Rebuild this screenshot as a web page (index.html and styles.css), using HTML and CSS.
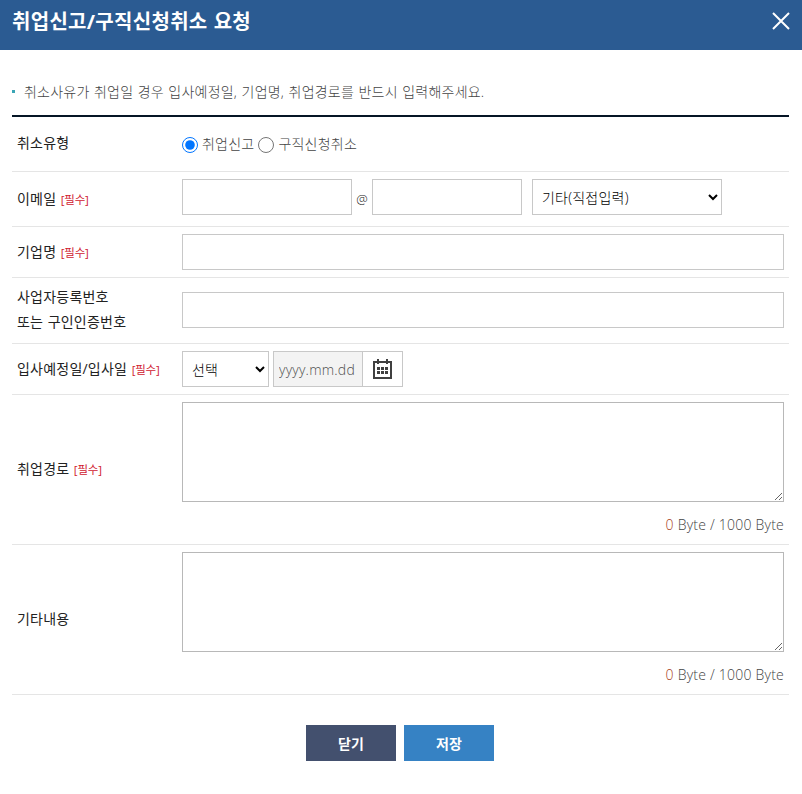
FILE: index.html
```html
<!DOCTYPE html>
<html lang="ko">
<head>
  <meta charset="UTF-8" />
  <meta name="viewport" content="width=device-width, initial-scale=1" />
  <title>취업신고/구직신청취소 요청</title>
  <link rel="stylesheet" href="styles.css">
</head>
<body>
  <div id="header">
    <h1>취업신고/구직신청취소 요청</h1>
    <button type="button" class="btn-close" aria-label="닫기">
      <svg width="18" height="18" viewBox="0 0 18 18"><path d="M1 1L17 17M17 1L1 17" stroke="#fff" stroke-width="2" fill="none"/></svg>
    </button>
  </div>

  <div id="container">
    <p class="notice">취소사유가 취업일 경우 입사예정일, 기업명, 취업경로를 반드시 입력해주세요.</p>

    <form id="cancel-form">
      <div class="row row-type">
        <div class="label">취소유형</div>
        <div class="field">
          <input type="radio" name="type" id="type1" checked /><label for="type1">취업신고</label>
          <input type="radio" name="type" id="type2" /><label for="type2">구직신청취소</label>
        </div>
      </div>
      <div class="row row-email">
        <div class="label">이메일 <span class="required">[필수]</span></div>
        <div class="field">
          <input type="text" class="email-id" />
          <span class="at">@</span>
          <input type="text" class="email-domain" />
          <select class="email-select"><option>기타(직접입력)</option></select>
        </div>
      </div>
      <div class="row">
        <div class="label">기업명 <span class="required">[필수]</span></div>
        <div class="field"><input type="text" class="full" /></div>
      </div>
      <div class="row row-number">
        <div class="label">사업자등록번호<br>또는 구인인증번호</div>
        <div class="field"><input type="text" class="full" /></div>
      </div>
      <div class="row">
        <div class="label">입사예정일/입사일 <span class="required">[필수]</span></div>
        <div class="field">
          <select class="date-select"><option>선택</option></select>
          <div class="date-box">
            <input type="text" class="date" placeholder="yyyy.mm.dd" disabled />
            <button type="button" class="btn-calendar" aria-label="달력">
              <svg width="20" height="20" viewBox="0 0 20 20">
                <path d="M1 3H18V19H1Z" fill="none" stroke="#404040" stroke-width="2"/>
                <path d="M4 0h2v5H4zM13 0h2v5h-2zM4 8h3v3H4zM8 8h3v3H8zM12 8h3v3h-3zM4 12h3v3H4zM8 12h3v3H8zM12 12h3v3h-3z" fill="#404040"/>
              </svg>
            </button>
          </div>
        </div>
      </div>
      <div class="row row-area">
        <div class="label">취업경로 <span class="required">[필수]</span></div>
        <div class="field">
          <textarea></textarea>
          <p class="byte"><span>0</span> Byte / 1000 Byte</p>
        </div>
      </div>
      <div class="row row-area">
        <div class="label">기타내용</div>
        <div class="field">
          <textarea></textarea>
          <p class="byte"><span>0</span> Byte / 1000 Byte</p>
        </div>
      </div>

      <div class="buttons">
        <button type="button" class="btn btn-cancel">닫기</button>
        <button type="submit" class="btn btn-save">저장</button>
      </div>
    </form>
  </div>
</body>
</html>
```
FILE: styles.css
```css
* {
  box-sizing: border-box;
}
body {
  margin: 0;
  background: #ffffff;
  font-family: "Open Sans", "Noto Sans CJK KR", sans-serif;
  font-size: 14px;
  font-weight: 300;
  letter-spacing: 0.22px;
  word-spacing: 0.6px;
  color: #444444;
}
input, select, textarea, button {
  margin: 0;
  font: inherit;
  letter-spacing: inherit;
  border-radius: 0;
}
#header {
  display: flex;
  justify-content: space-between;
  height: 50px;
  padding: 0 12px;
  background: #2b5b92;
}
#header h1 {
  margin: 0;
  font-size: 20px;
  line-height: 43px;
  font-weight: 700;
  letter-spacing: 0.3px;
  color: #ffffff;
}
.btn-close {
  width: 18px;
  height: 18px;
  margin-top: 12px;
  padding: 0;
  border: none;
  background: none;
}
.btn-close svg,
.btn-calendar svg {
  display: block;
}
#container {
  padding: 29px 13px 0 12px;
}
.notice {
  display: flex;
  align-items: center;
  gap: 9px;
  height: 24px;
  margin: 0 0 12px;
  white-space: nowrap;
}
.notice::before {
  content: "";
  width: 3px;
  height: 3px;
  background: #3aa5b5;
}
#cancel-form {
  border-top: 2px solid #051525;
}
.row {
  display: flex;
  align-items: center;
  height: 51px;
  padding: 0 5px;
  border-bottom: 1px solid #e5e5e5;
}
.row-type,
.row-email {
  height: 55px;
}
.row-type .label,
.row-type .field label {
  padding-bottom: 3px;
}
.row-type .field {
  padding-top: 1px;
}
.row-email .field {
  padding-bottom: 4px;
}
.row-number {
  height: 66px;
  padding-bottom: 2px;
}
.row-number .label {
  padding-bottom: 2px;
}
.row-area {
  height: 150px;
}
.row-area .label {
  padding-bottom: 2px;
}
.label {
  width: 165px;
  line-height: 25px;
  font-weight: 400;
  color: #222222;
  white-space: nowrap;
}
.required {
  font-size: 11.5px;
  letter-spacing: -0.2px;
  color: #d02030;
}
.field {
  display: flex;
  flex: 1;
  align-items: center;
}
input[type="text"],
select {
  height: 36px;
  border: 1px solid #c8c8c8;
  background: #ffffff;
}
input[type="radio"] {
  width: 16px;
  height: 16px;
  margin: 0 4px 0 0;
}
.field label + input[type="radio"] {
  margin-left: 4px;
}
.full {
  width: 100%;
}
.email-id {
  width: 170px;
}
.at {
  width: 20px;
  padding-top: 4px;
  font-size: 13px;
  text-align: center;
  color: #222222;
}
.email-domain {
  width: 150px;
}
select {
  padding: 0 0 0 5px;
  color: #000000;
}
.email-select {
  width: 190px;
  margin-left: 10px;
}
.date-select {
  width: 87px;
}
.date-box {
  display: flex;
  margin-left: 4px;
}
input.date {
  width: 89px;
  padding: 0 5px;
  border-right: none;
  background: #f3f3f3;
}
.date::placeholder {
  color: #505050;
}
.btn-calendar {
  width: 41px;
  height: 36px;
  padding: 0 0 0 10px;
  border: 1px solid #c8c8c8;
  background: #ffffff;
}
.row-area .field {
  flex-direction: column;
  align-items: stretch;
}
textarea {
  width: 100%;
  height: 100px;
  border: 1px solid #b8b8b8;
}
.byte {
  margin: 10px 0 0;
  line-height: 25px;
  word-spacing: 0;
  text-align: right;
}
.byte span {
  color: #a84020;
}
.buttons {
  display: flex;
  justify-content: center;
  gap: 8px;
  padding: 30px 1px 0 0;
}
.btn {
  width: 90px;
  height: 36px;
  padding: 0 0 1px;
  border: none;
  font-weight: 700;
  color: #ffffff;
}
.btn-cancel {
  background: #43506e;
}
.btn-save {
  background: #3682c4;
}
```
